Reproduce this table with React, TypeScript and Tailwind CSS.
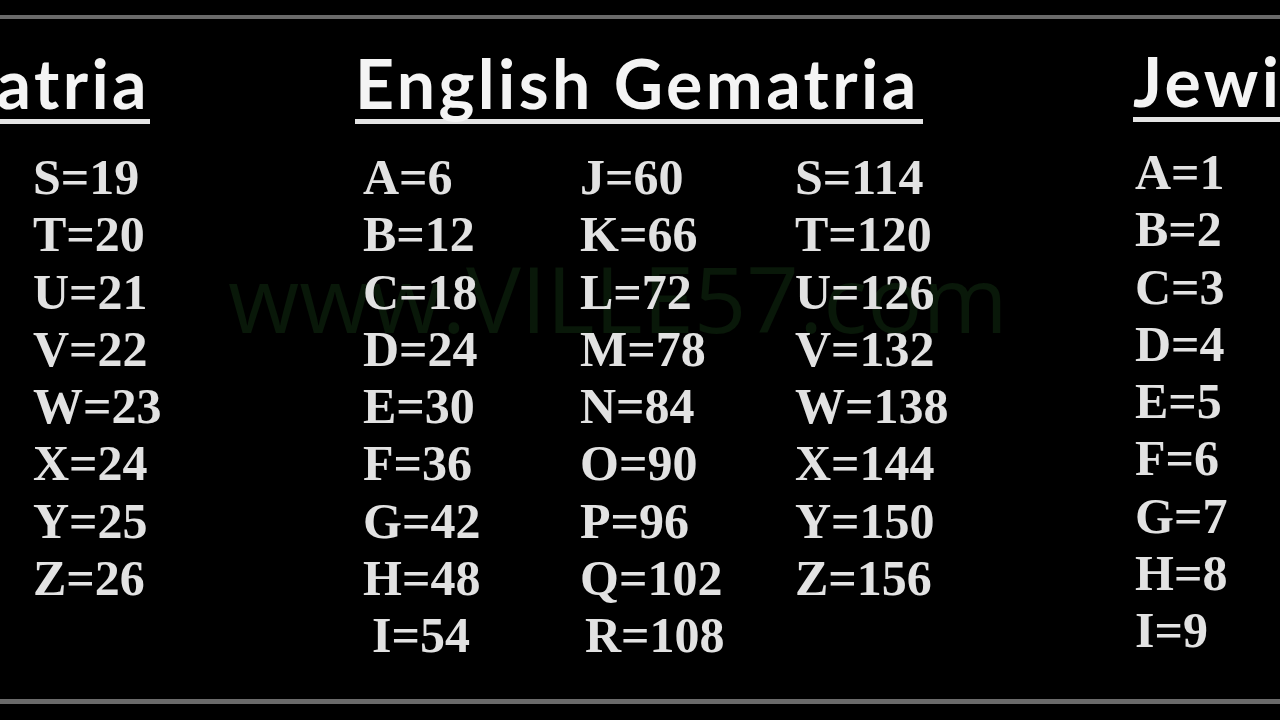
import React from "react"

const simple = ["S=19", "T=20", "U=21", "V=22", "W=23", "X=24", "Y=25", "Z=26"]

const english = [
  ["A=6", "B=12", "C=18", "D=24", "E=30", "F=36", "G=42", "H=48", "I=54"],
  ["J=60", "K=66", "L=72", "M=78", "N=84", "O=90", "P=96", "Q=102", "R=108"],
  ["S=114", "T=120", "U=126", "V=132", "W=138", "X=144", "Y=150", "Z=156"],
]

const jewish = ["A=1", "B=2", "C=3", "D=4", "E=5", "F=6", "G=7", "H=8", "I=9"]

const titleFont = { fontFamily: "Lato, 'Open Sans', sans-serif" }
const valueFont = { fontFamily: "'Liberation Serif', 'DejaVu Serif', serif" }

function Title({ children }: { children: React.ReactNode }) {
  return (
    <div className="whitespace-nowrap border-b-[5px] border-[#e4e4e4] pb-[1px]">
      <h2
        className="text-[68px] font-bold leading-[70px] text-[#f4f4f4] tracking-[3.4px]"
        style={titleFont}
      >
        {children}
      </h2>
    </div>
  )
}

function Values({ items, shift = {} }: { items: string[]; shift?: Record<number, string> }) {
  return (
    <ul className="flex flex-col" style={valueFont}>
      {items.map((v, i) => (
        <li
          key={v}
          className={`text-[50px] font-bold leading-[57.3px] text-[#e2e2e2] ${shift[i] ?? ""}`}
        >
          {v}
        </li>
      ))}
    </ul>
  )
}

export default function App() {
  return (
    <div className="relative w-[1280px] h-[720px] overflow-hidden bg-black">
      <div className="absolute left-0 right-0 top-[15px] h-[4px] bg-[#6a6a6a]" />
      <div className="absolute left-0 right-0 top-[699px] h-[5px] bg-[#6a6a6a]" />

      {/* faint watermark */}
      <div
        className="absolute left-[228px] top-[252px] text-[92px] leading-none text-[#091809] whitespace-nowrap"
        style={{ fontFamily: "'Open Sans', sans-serif" }}
      >
        www.VILLE57.com
      </div>

      <div className="relative flex pt-[48px]">
        {/* Simple Gematria, cut off on the left */}
        <section className="w-[150px] shrink-0 flex flex-col items-end">
          <Title>Simple Gematria</Title>
          <div className="self-start pl-[33px] pt-[25px]">
            <Values items={simple} />
          </div>
        </section>

        <section className="ml-[205px] w-[568px] shrink-0 flex flex-col">
          <Title>English Gematria</Title>
          <div className="grid grid-cols-[217px_215px_auto] pl-[8px] pt-[25px]">
            <Values items={english[0]} shift={{ 8: "pl-[9px]" }} />
            <Values items={english[1]} shift={{ 8: "pl-[5px]" }} />
            <Values items={english[2]} />
          </div>
        </section>

        <section className="ml-[210px] shrink-0 flex flex-col">
          <div className="-mt-[2px]">
            <Title>Jewish Gematria</Title>
          </div>
          <div className="pl-[2px] pt-[22px]">
            <Values items={jewish} />
          </div>
        </section>
      </div>
    </div>
  )
}
